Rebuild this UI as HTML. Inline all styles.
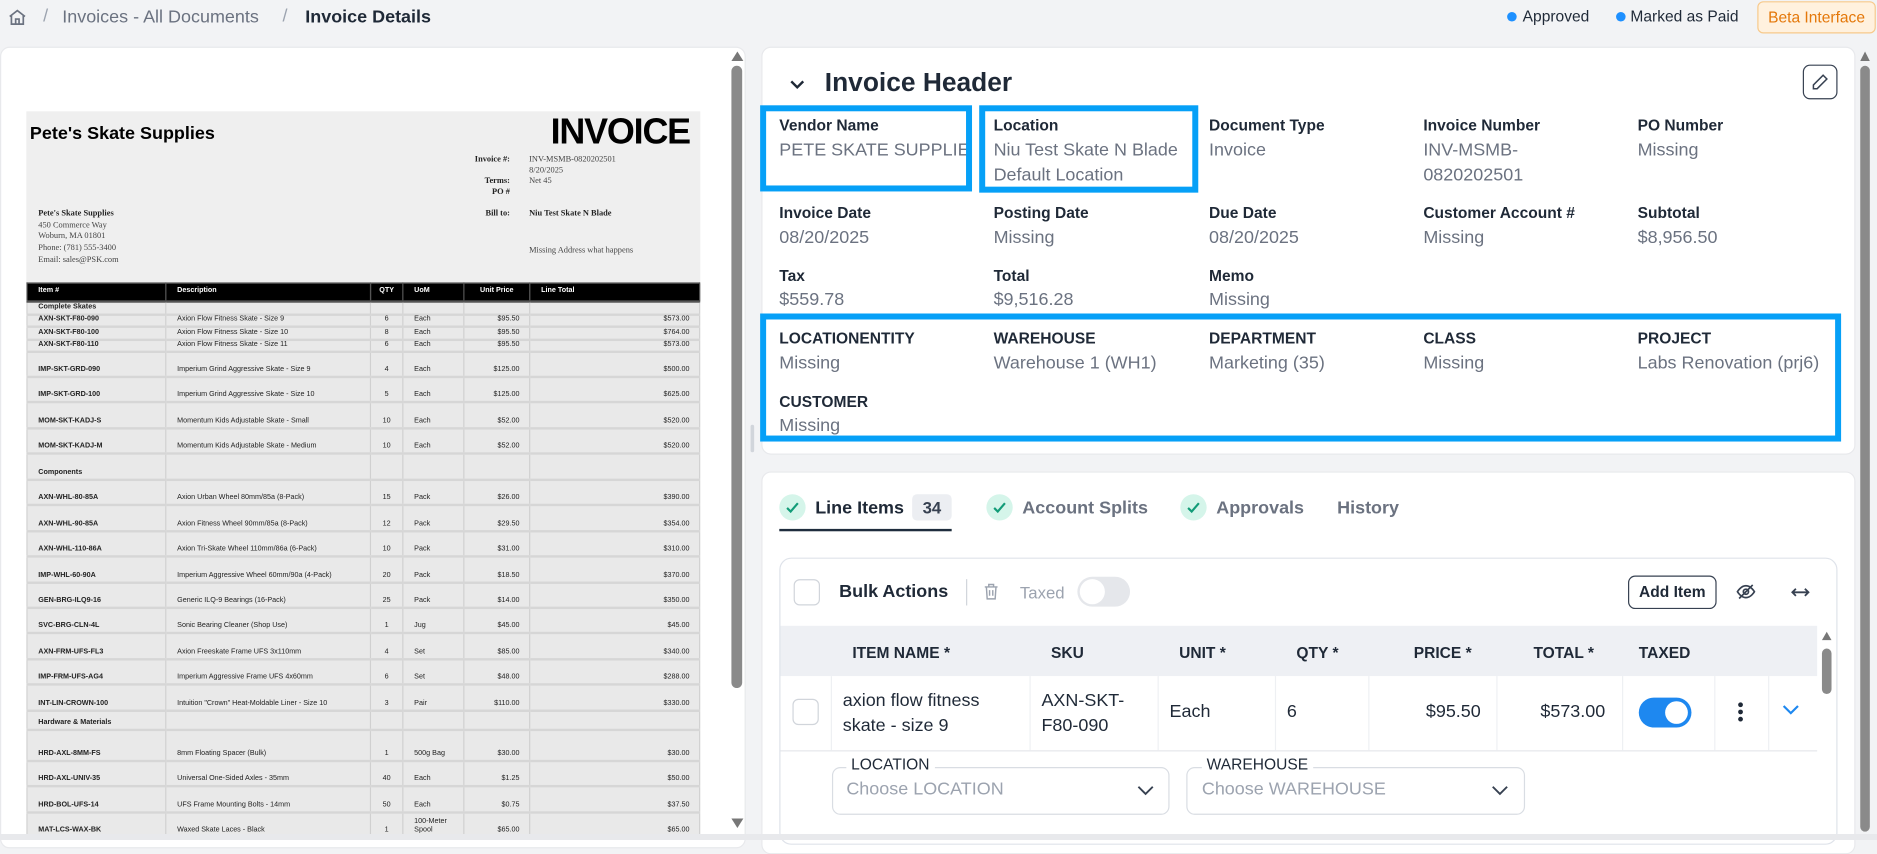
<!DOCTYPE html>
<html><head><meta charset="utf-8"><style>
*{box-sizing:border-box;margin:0;padding:0}
body{width:1877px;height:840px;overflow:hidden;background:#f2f3f5;font-family:"Liberation Sans",sans-serif}
#w{width:1568px;height:702px;position:relative;transform:scale(1.19707,1.19658);transform-origin:0 0}
.a{position:absolute;white-space:nowrap}
.card{position:absolute;background:#fff;border-radius:8px;border:1px solid #e8e9ec}
.lbl{position:absolute;font-size:13px;font-weight:bold;color:#1f2937;white-space:nowrap}
.val{position:absolute;font-size:15px;color:#6b7280;white-space:nowrap;line-height:21px}
.blue{position:absolute;border:5px solid #06a0f7}
.doc{position:absolute;left:22px;top:93px;width:563px;height:604px;background:#efefef;overflow:hidden;font-family:"Liberation Serif",serif;color:#222}
.tb{position:absolute;left:0;top:143px;width:563px;border-collapse:collapse;font-family:"Liberation Sans",sans-serif;font-size:6px;line-height:7px}
.tb td{border:1px solid #d0d0d0;border-bottom:2px solid #d6d6d6;padding:0 0 1px 9px;vertical-align:bottom;background:#e9e9e9;color:#222}
.tb tr.h td{background:#000;color:#fff;font-weight:bold;height:15px;vertical-align:middle;border-color:#555}
.tb tr.t{height:21.45px}
.tb td.b{font-weight:bold}
.tb td.r{text-align:right;padding-right:8px}
.tb td.c{text-align:center;padding-left:0}
.th{position:absolute;top:538px;font-size:13px;font-weight:bold;color:#1f2937}
.chk{position:absolute;width:22px;height:22px;border:1.5px solid #d1d5db;border-radius:5px;background:#fff}
.tab{position:absolute;top:416px;font-size:15px;color:#6b7280;font-weight:bold}
.cc{position:absolute;top:413px;width:22px;height:22px;border-radius:50%;background:#d5f5ea}
</style></head><body><div id="w">

<svg class="a" style="left:6px;top:6px" width="17" height="17" viewBox="0 0 24 24" fill="none" stroke="#6b7280" stroke-width="2"><path d="M3 11l9-7 9 7M5 9.5V20h14V9.5M10 20v-6h4v6"/></svg>
<div class="a" style="left:36px;top:5px;font-size:15px;color:#9ca3af">/</div>
<div class="a" style="left:52px;top:6px;font-size:15px;color:#6b7280">Invoices - All Documents</div>
<div class="a" style="left:236px;top:5px;font-size:15px;color:#9ca3af">/</div>
<div class="a" style="left:255px;top:6px;font-size:15px;color:#1f2937;font-weight:bold">Invoice Details</div>
<div class="a" style="left:1259px;top:10px;width:8px;height:8px;border-radius:50%;background:#1e90ff"></div>
<div class="a" style="left:1272px;top:6px;font-size:13px;color:#1f2937">Approved</div>
<div class="a" style="left:1350px;top:10px;width:8px;height:8px;border-radius:50%;background:#1e90ff"></div>
<div class="a" style="left:1362px;top:6px;font-size:13px;color:#1f2937">Marked as Paid</div>
<div class="a" style="left:1468px;top:1px;width:99px;height:27px;border:1px solid #f7c98b;background:#fff1de;border-radius:5px;font-size:13px;color:#e4780a;text-align:center;line-height:25px">Beta Interface</div>

<div class="card" style="left:0;top:39px;width:623px;height:670px;border-radius:8px"></div>
<div class="a" style="left:611px;top:43px;width:0;height:0;border-left:5px solid transparent;border-right:5px solid transparent;border-bottom:8px solid #777"></div>
<div class="a" style="left:611px;top:55px;width:9px;height:520px;background:#8a8a8a;border-radius:5px"></div>
<div class="a" style="left:611px;top:684px;width:0;height:0;border-left:5px solid transparent;border-right:5px solid transparent;border-top:8px solid #777"></div>
<div class="a" style="left:627px;top:355px;width:3px;height:23px;background:#d1d5db;border-radius:2px"></div>

<div class="doc">
 <div class="a" style="left:3px;top:10px;font-family:'Liberation Sans',sans-serif;font-size:15px;font-weight:bold;color:#000">Pete's Skate Supplies</div>
 <div class="a" style="left:438px;top:1px;font-family:'Liberation Sans',sans-serif;font-size:30px;font-weight:bold;color:#000;letter-spacing:-1px">INVOICE</div>
 <div class="a" style="left:366px;top:36px;font-size:7px;line-height:9px;text-align:right;width:38px;font-weight:bold">Invoice #:<br>&nbsp;<br>Terms:<br>PO #</div>
 <div class="a" style="left:420px;top:36px;font-size:7px;line-height:9px;color:#444">INV-MSMB-0820202501<br>8/20/2025<br>Net 45</div>
 <div class="a" style="left:370px;top:81px;font-size:7px;width:34px;text-align:right;font-weight:bold">Bill to:</div>
 <div class="a" style="left:420px;top:81px;font-size:7px;font-weight:bold">Niu Test Skate N Blade</div>
 <div class="a" style="left:420px;top:112px;font-size:7px;color:#444">Missing Address what happens</div>
 <div class="a" style="left:10px;top:81px;font-size:7px;line-height:9.7px;color:#444"><b style="color:#222">Pete's Skate Supplies</b><br>450 Commerce Way<br>Woburn, MA 01801<br>Phone: (781) 555-3400<br>Email: sales@PSK.com</div>
 <table class="tb">
  <colgroup><col style="width:116px"><col style="width:171px"><col style="width:27px"><col style="width:51px"><col style="width:55px"><col></colgroup>
  <tr class="h"><td>Item #</td><td>Description</td><td class="c">QTY</td><td>UoM</td><td class="c">Unit Price</td><td>Line Total</td></tr>
  <tr style="height:11px"><td class="b">Complete Skates</td><td></td><td></td><td></td><td></td><td></td></tr>
  <tr style="height:10.5px"><td class="b">AXN-SKT-F80-090</td><td>Axion Flow Fitness Skate - Size 9</td><td class="c">6</td><td>Each</td><td class="r">$95.50</td><td class="r">$573.00</td></tr>
  <tr style="height:10.5px"><td class="b">AXN-SKT-F80-100</td><td>Axion Flow Fitness Skate - Size 10</td><td class="c">8</td><td>Each</td><td class="r">$95.50</td><td class="r">$764.00</td></tr>
  <tr style="height:10.5px"><td class="b">AXN-SKT-F80-110</td><td>Axion Flow Fitness Skate - Size 11</td><td class="c">6</td><td>Each</td><td class="r">$95.50</td><td class="r">$573.00</td></tr>
  <tr style="height:21px"><td class="b">IMP-SKT-GRD-090</td><td>Imperium Grind Aggressive Skate - Size 9</td><td class="c">4</td><td>Each</td><td class="r">$125.00</td><td class="r">$500.00</td></tr>
  <tr class="t"><td class="b">IMP-SKT-GRD-100</td><td>Imperium Grind Aggressive Skate - Size 10</td><td class="c">5</td><td>Each</td><td class="r">$125.00</td><td class="r">$625.00</td></tr>
  <tr class="t"><td class="b">MOM-SKT-KADJ-S</td><td>Momentum Kids Adjustable Skate - Small</td><td class="c">10</td><td>Each</td><td class="r">$52.00</td><td class="r">$520.00</td></tr>
  <tr class="t"><td class="b">MOM-SKT-KADJ-M</td><td>Momentum Kids Adjustable Skate - Medium</td><td class="c">10</td><td>Each</td><td class="r">$52.00</td><td class="r">$520.00</td></tr>
  <tr class="t"><td class="b">Components</td><td></td><td></td><td></td><td></td><td></td></tr>
  <tr class="t"><td class="b">AXN-WHL-80-85A</td><td>Axion Urban Wheel 80mm/85a (8-Pack)</td><td class="c">15</td><td>Pack</td><td class="r">$26.00</td><td class="r">$390.00</td></tr>
  <tr class="t"><td class="b">AXN-WHL-90-85A</td><td>Axion Fitness Wheel 90mm/85a (8-Pack)</td><td class="c">12</td><td>Pack</td><td class="r">$29.50</td><td class="r">$354.00</td></tr>
  <tr class="t"><td class="b">AXN-WHL-110-86A</td><td>Axion Tri-Skate Wheel 110mm/86a (6-Pack)</td><td class="c">10</td><td>Pack</td><td class="r">$31.00</td><td class="r">$310.00</td></tr>
  <tr class="t"><td class="b">IMP-WHL-60-90A</td><td>Imperium Aggressive Wheel 60mm/90a (4-Pack)</td><td class="c">20</td><td>Pack</td><td class="r">$18.50</td><td class="r">$370.00</td></tr>
  <tr class="t"><td class="b">GEN-BRG-ILQ9-16</td><td>Generic ILQ-9 Bearings (16-Pack)</td><td class="c">25</td><td>Pack</td><td class="r">$14.00</td><td class="r">$350.00</td></tr>
  <tr class="t"><td class="b">SVC-BRG-CLN-4L</td><td>Sonic Bearing Cleaner (Shop Use)</td><td class="c">1</td><td>Jug</td><td class="r">$45.00</td><td class="r">$45.00</td></tr>
  <tr class="t"><td class="b">AXN-FRM-UFS-FL3</td><td>Axion Freeskate Frame UFS 3x110mm</td><td class="c">4</td><td>Set</td><td class="r">$85.00</td><td class="r">$340.00</td></tr>
  <tr class="t"><td class="b">IMP-FRM-UFS-AG4</td><td>Imperium Aggressive Frame UFS 4x60mm</td><td class="c">6</td><td>Set</td><td class="r">$48.00</td><td class="r">$288.00</td></tr>
  <tr class="t"><td class="b">INT-LIN-CROWN-100</td><td>Intuition "Crown" Heat-Moldable Liner - Size 10</td><td class="c">3</td><td>Pair</td><td class="r">$110.00</td><td class="r">$330.00</td></tr>
  <tr style="height:16px"><td class="b">Hardware &amp; Materials</td><td></td><td></td><td></td><td></td><td></td></tr>
  <tr style="height:26px"><td class="b">HRD-AXL-8MM-FS</td><td>8mm Floating Spacer (Bulk)</td><td class="c">1</td><td>500g Bag</td><td class="r">$30.00</td><td class="r">$30.00</td></tr>
  <tr class="t"><td class="b">HRD-AXL-UNIV-35</td><td>Universal One-Sided Axles - 35mm</td><td class="c">40</td><td>Each</td><td class="r">$1.25</td><td class="r">$50.00</td></tr>
  <tr class="t"><td class="b">HRD-BOL-UFS-14</td><td>UFS Frame Mounting Bolts - 14mm</td><td class="c">50</td><td>Each</td><td class="r">$0.75</td><td class="r">$37.50</td></tr>
  <tr class="t"><td class="b">MAT-LCS-WAX-BK</td><td>Waxed Skate Laces - Black</td><td class="c">1</td><td>100-Meter Spool</td><td class="r">$65.00</td><td class="r">$65.00</td></tr>
 </table>
</div>

<div class="a" style="left:1554px;top:43px;width:0;height:0;border-left:4px solid transparent;border-right:4px solid transparent;border-bottom:8px solid #777"></div>
<div class="a" style="left:1554px;top:55px;width:8px;height:640px;background:#8a8a8a;border-radius:4px"></div>

<div class="card" style="left:636px;top:39px;width:914px;height:341px"></div>
<svg class="a" style="left:658px;top:62px" width="16" height="16" viewBox="0 0 16 16" fill="none" stroke="#1f2937" stroke-width="2"><path d="M3 6l5 5 5-5"/></svg>
<div class="a" style="left:689px;top:56px;font-size:22px;color:#1f2937;font-weight:bold">Invoice Header</div>
<div class="a" style="left:1506px;top:54px;width:29px;height:29px;border:1.5px solid #374151;border-radius:6px"></div>
<svg class="a" style="left:1513px;top:61px" width="15" height="15" viewBox="0 0 24 24" fill="none" stroke="#374151" stroke-width="2"><path d="M16 3l5 5L8 21H3v-5z"/></svg>

<div class="lbl" style="left:651px;top:97px">Vendor Name</div><div class="val" style="left:651px;top:115px;width:160px;overflow:hidden">PETE SKATE SUPPLIES</div>
<div class="lbl" style="left:830px;top:97px">Location</div><div class="val" style="left:830px;top:115px">Niu Test Skate N Blade<br>Default Location</div>
<div class="lbl" style="left:1010px;top:97px">Document Type</div><div class="val" style="left:1010px;top:115px">Invoice</div>
<div class="lbl" style="left:1189px;top:97px">Invoice Number</div><div class="val" style="left:1189px;top:115px">INV-MSMB-<br>0820202501</div>
<div class="lbl" style="left:1368px;top:97px">PO Number</div><div class="val" style="left:1368px;top:115px">Missing</div>

<div class="lbl" style="left:651px;top:170px">Invoice Date</div><div class="val" style="left:651px;top:188px">08/20/2025</div>
<div class="lbl" style="left:830px;top:170px">Posting Date</div><div class="val" style="left:830px;top:188px">Missing</div>
<div class="lbl" style="left:1010px;top:170px">Due Date</div><div class="val" style="left:1010px;top:188px">08/20/2025</div>
<div class="lbl" style="left:1189px;top:170px">Customer Account #</div><div class="val" style="left:1189px;top:188px">Missing</div>
<div class="lbl" style="left:1368px;top:170px">Subtotal</div><div class="val" style="left:1368px;top:188px">$8,956.50</div>

<div class="lbl" style="left:651px;top:223px">Tax</div><div class="val" style="left:651px;top:240px">$559.78</div>
<div class="lbl" style="left:830px;top:223px">Total</div><div class="val" style="left:830px;top:240px">$9,516.28</div>
<div class="lbl" style="left:1010px;top:223px">Memo</div><div class="val" style="left:1010px;top:240px">Missing</div>

<div class="lbl" style="left:651px;top:275px">LOCATIONENTITY</div><div class="val" style="left:651px;top:293px">Missing</div>
<div class="lbl" style="left:830px;top:275px">WAREHOUSE</div><div class="val" style="left:830px;top:293px">Warehouse 1 (WH1)</div>
<div class="lbl" style="left:1010px;top:275px">DEPARTMENT</div><div class="val" style="left:1010px;top:293px">Marketing (35)</div>
<div class="lbl" style="left:1189px;top:275px">CLASS</div><div class="val" style="left:1189px;top:293px">Missing</div>
<div class="lbl" style="left:1368px;top:275px">PROJECT</div><div class="val" style="left:1368px;top:293px">Labs Renovation (prj6)</div>
<div class="lbl" style="left:651px;top:328px">CUSTOMER</div><div class="val" style="left:651px;top:345px">Missing</div>

<div class="blue" style="left:635px;top:88px;width:177px;height:72px"></div>
<div class="blue" style="left:818px;top:88px;width:183px;height:73px"></div>
<div class="blue" style="left:635px;top:262px;width:903px;height:107px"></div>

<div class="card" style="left:636px;top:394px;width:914px;height:320px"></div>
<div class="cc" style="left:651px"></div><svg class="a" style="left:655px;top:417px" width="14" height="14" viewBox="0 0 14 14" fill="none" stroke="#129c78" stroke-width="1.8"><path d="M2.5 7.5l3 3 6-7"/></svg>
<div class="tab" style="left:681px;color:#1f2937">Line Items</div>
<div class="a" style="left:762px;top:413px;width:33px;height:22px;background:#eceef2;border-radius:4px;font-size:14px;font-weight:bold;color:#374151;text-align:center;line-height:22px">34</div>
<div class="a" style="left:651px;top:442px;width:144px;height:2px;background:#1f2d3d"></div>
<div class="cc" style="left:824px"></div><svg class="a" style="left:828px;top:417px" width="14" height="14" viewBox="0 0 14 14" fill="none" stroke="#129c78" stroke-width="1.8"><path d="M2.5 7.5l3 3 6-7"/></svg>
<div class="tab" style="left:854px">Account Splits</div>
<div class="cc" style="left:986px"></div><svg class="a" style="left:990px;top:417px" width="14" height="14" viewBox="0 0 14 14" fill="none" stroke="#129c78" stroke-width="1.8"><path d="M2.5 7.5l3 3 6-7"/></svg>
<div class="tab" style="left:1016px">Approvals</div>
<div class="tab" style="left:1117px">History</div>

<div class="a" style="left:651px;top:466px;width:884px;height:240px;border:1px solid #dfe3ea;border-radius:10px;background:#fff"></div>
<div class="chk" style="left:663px;top:484px"></div>
<div class="a" style="left:701px;top:486px;font-size:15px;font-weight:bold;color:#1f2937">Bulk Actions</div>
<div class="a" style="left:807px;top:484px;width:1px;height:22px;background:#d1d5db"></div>
<svg class="a" style="left:820px;top:486px" width="16" height="17" viewBox="0 0 24 24" fill="none" stroke="#9ca3af" stroke-width="1.8"><path d="M4 6h16M9 6V3h6v3M6 6l1 15h10l1-15M10 10v7M14 10v7"/></svg>
<div class="a" style="left:852px;top:487px;font-size:14px;color:#9ca3af">Taxed</div>
<div class="a" style="left:900px;top:482px;width:44px;height:25px;border-radius:13px;background:#e5e7eb"><div style="position:absolute;left:2px;top:2px;width:21px;height:21px;border-radius:50%;background:#fff"></div></div>
<div class="a" style="left:1360px;top:481px;width:74px;height:28px;border:1.5px solid #374151;border-radius:6px;font-size:13px;font-weight:bold;color:#1f2937;text-align:center;line-height:25px">Add Item</div>
<svg class="a" style="left:1450px;top:486px" width="17" height="17" viewBox="0 0 24 24" fill="none" stroke="#374151" stroke-width="2"><path d="M2 12s4-7 10-7 10 7 10 7-4 7-10 7S2 12 2 12z"/><circle cx="12" cy="12" r="3"/><path d="M4 20L20 4"/></svg>
<svg class="a" style="left:1495px;top:487px" width="18" height="16" viewBox="0 0 24 20" fill="none" stroke="#374151" stroke-width="2"><path d="M3 10h18M7 6l-4 4 4 4M17 6l4 4-4 4"/></svg>

<div class="a" style="left:652px;top:523px;width:866px;height:42px;background:#eef0f4"></div>
<div class="th" style="left:712px">ITEM NAME *</div>
<div class="th" style="left:878px">SKU</div>
<div class="th" style="left:985px">UNIT *</div>
<div class="th" style="left:1083px">QTY *</div>
<div class="th" style="left:1181px">PRICE *</div>
<div class="th" style="left:1281px">TOTAL *</div>
<div class="th" style="left:1369px">TAXED</div>
<div class="a" style="left:652px;top:627px;width:866px;height:1px;background:#e5e7eb"></div>
<div class="a" style="left:694px;top:565px;width:1px;height:62px;background:#eef0f3"></div>
<div class="a" style="left:860px;top:565px;width:1px;height:62px;background:#eef0f3"></div>
<div class="a" style="left:967px;top:565px;width:1px;height:62px;background:#eef0f3"></div>
<div class="a" style="left:1065px;top:565px;width:1px;height:62px;background:#eef0f3"></div>
<div class="a" style="left:1143px;top:565px;width:1px;height:62px;background:#eef0f3"></div>
<div class="a" style="left:1250px;top:565px;width:1px;height:62px;background:#eef0f3"></div>
<div class="a" style="left:1355px;top:565px;width:1px;height:62px;background:#eef0f3"></div>
<div class="a" style="left:1432px;top:565px;width:1px;height:62px;background:#eef0f3"></div>
<div class="a" style="left:1477px;top:565px;width:1px;height:62px;background:#eef0f3"></div>
<div class="chk" style="left:662px;top:584px"></div>
<div class="a" style="left:704px;top:575px;font-size:15px;line-height:21px;color:#1f2937">axion flow fitness<br>skate - size 9</div>
<div class="a" style="left:870px;top:575px;font-size:15px;line-height:21px;color:#1f2937">AXN-SKT-<br>F80-090</div>
<div class="a" style="left:977px;top:586px;font-size:15px;color:#1f2937">Each</div>
<div class="a" style="left:1075px;top:586px;font-size:15px;color:#1f2937">6</div>
<div class="a" style="left:1150px;top:586px;width:87px;text-align:right;font-size:15px;color:#1f2937">$95.50</div>
<div class="a" style="left:1255px;top:586px;width:86px;text-align:right;font-size:15px;color:#1f2937">$573.00</div>
<div class="a" style="left:1369px;top:583px;width:44px;height:25px;border-radius:13px;background:#1e88f0"><div style="position:absolute;right:3px;top:3px;width:19px;height:19px;border-radius:50%;background:#fff"></div></div>
<div class="a" style="left:1452px;top:587px;width:4px;height:4px;border-radius:50%;background:#1f2937;box-shadow:0 6px 0 #1f2937,0 12px 0 #1f2937"></div>
<svg class="a" style="left:1489px;top:588px" width="14" height="10" viewBox="0 0 14 10" fill="none" stroke="#1e88f0" stroke-width="1.8"><path d="M1 2l6 6 6-6"/></svg>

<div class="a" style="left:695px;top:641px;width:282px;height:40px;border:1px solid #d9dde3;border-radius:7px"></div>
<div class="a" style="left:707px;top:631px;background:#fff;padding:0 4px;font-size:13px;color:#1f2937">LOCATION</div>
<div class="a" style="left:707px;top:651px;font-size:15px;color:#9ca3af">Choose LOCATION</div>
<svg class="a" style="left:950px;top:656px" width="14" height="9" viewBox="0 0 14 9" fill="none" stroke="#374151" stroke-width="1.6"><path d="M1 1.5l6 6 6-6"/></svg>
<div class="a" style="left:991px;top:641px;width:283px;height:40px;border:1px solid #d9dde3;border-radius:7px"></div>
<div class="a" style="left:1004px;top:631px;background:#fff;padding:0 4px;font-size:13px;color:#1f2937">WAREHOUSE</div>
<div class="a" style="left:1004px;top:651px;font-size:15px;color:#9ca3af">Choose WAREHOUSE</div>
<svg class="a" style="left:1246px;top:656px" width="14" height="9" viewBox="0 0 14 9" fill="none" stroke="#374151" stroke-width="1.6"><path d="M1 1.5l6 6 6-6"/></svg>

<div class="a" style="left:1522px;top:528px;width:0;height:0;border-left:4px solid transparent;border-right:4px solid transparent;border-bottom:7px solid #777"></div>
<div class="a" style="left:1522px;top:542px;width:8px;height:38px;background:#8a8a8a;border-radius:4px"></div>
<div class="a" style="left:0;top:697px;width:1568px;height:5px;background:#e8e9ec"></div>
</div></body></html>
